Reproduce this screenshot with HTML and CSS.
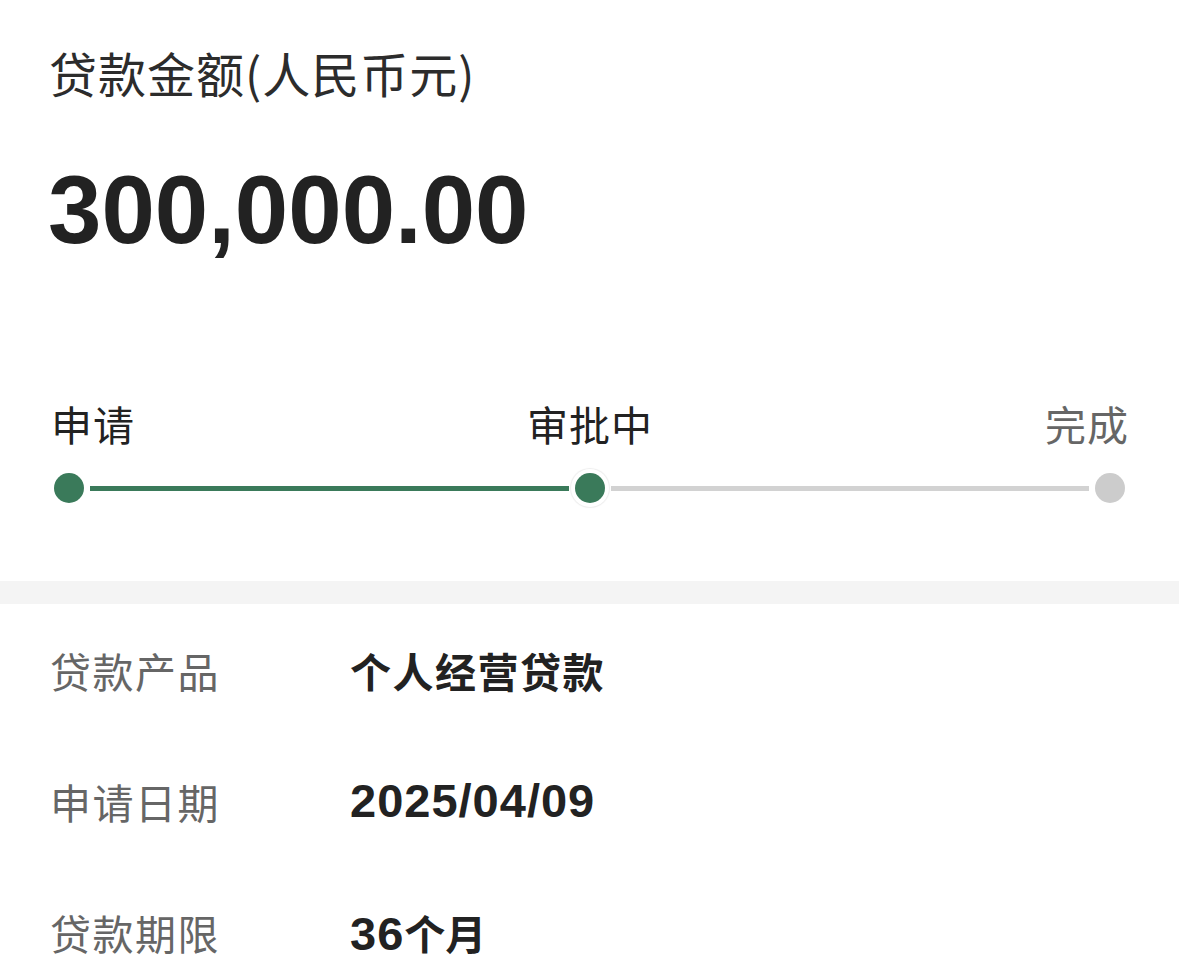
FILE: index.html
```html
<!DOCTYPE html>
<html lang="zh-CN">
<head>
<meta charset="utf-8">
<title>贷款详情</title>
<link rel="stylesheet" href="styles.css">
</head>
<body>
<main class="page">
  <section class="summary">
    <div class="title">贷款金额(人民币元)</div>
    <div class="amount">300,000.00</div>
    <div class="steps">
      <div class="labels">
        <span class="label done">申请</span>
        <span class="label done">审批中</span>
        <span class="label todo">完成</span>
      </div>
      <div class="track">
        <span class="dot green"></span>
        <span class="line green"></span>
        <span class="dot green current"></span>
        <span class="line gray"></span>
        <span class="dot gray"></span>
      </div>
    </div>
  </section>
  <div class="band"></div>
  <section class="details">
    <div class="row"><span class="key">贷款产品</span><span class="val">个人经营贷款</span></div>
    <div class="row"><span class="key">申请日期</span><span class="val num">2025/04/09</span></div>
    <div class="row"><span class="key">贷款期限</span><span class="val num">36<span class="cjk">个月</span></span></div>
  </section>
</main>
</body>
</html>
```

FILE: styles.css
```css
html, body {
  margin: 0;
  padding: 0;
  background: #ffffff;
}
body {
  font-family: "Liberation Sans", "Noto Sans CJK SC", sans-serif;
  color: #222222;
}
.page {
  width: 1179px;
  height: 974px;
  overflow: hidden;
}
.summary {
  padding: 40px 0 0 0;
}
.title {
  padding-left: 49px;
  font-family: "Noto Sans CJK SC", sans-serif;
  font-size: 48px;
  letter-spacing: 1px;
  line-height: 64px;
  color: #2c2c2c;
}
.amount {
  margin-top: 51px;
  padding-left: 48px;
  font-size: 96px;
  font-weight: 700;
  line-height: 110px;
  color: #222222;
}
.steps {
  margin-top: 133px;
  padding-bottom: 78px;
}
.labels {
  display: flex;
  justify-content: space-between;
  padding: 0 50px 0 51px;
  height: 50px;
  align-items: center;
}
.label {
  font-family: "Noto Sans CJK SC", sans-serif;
  font-size: 41px;
  letter-spacing: 1px;
  line-height: 50px;
}
.label.done { color: #222222; }
.label.todo { color: #666666; }
.track {
  margin-top: 25px;
  display: flex;
  align-items: center;
  height: 30px;
  padding: 0 54px;
}
.dot {
  flex: 0 0 30px;
  width: 30px;
  height: 30px;
  border-radius: 50%;
}
.dot.green { background: #3a7a5a; }
.dot.gray { background: #cccccc; }
.dot.current {
  box-shadow: 0 0 0 4px #ffffff, 0 0 1px 5px rgba(0, 0, 0, 0.07);
}
.line {
  flex: 1;
  height: 5px;
  margin: 0 6px;
}
.line.green { background: #3a7a5a; }
.line.gray { background: #d2d2d2; }
.band {
  height: 23px;
  background: #f4f4f4;
}
.details {
  margin-top: 0;
}
.row {
  display: flex;
  align-items: center;
  height: 131px;
  padding-left: 50px;
}
.key {
  width: 300px;
  font-family: "Noto Sans CJK SC", sans-serif;
  font-size: 41px;
  letter-spacing: 1.5px;
  color: #666666;
}
.val {
  font-family: "Noto Sans CJK SC", sans-serif;
  font-size: 41px;
  font-weight: 700;
  letter-spacing: 1.5px;
  color: #222222;
}
.val.num {
  font-family: "Liberation Sans", "Noto Sans CJK SC", sans-serif;
  font-size: 47px;
  letter-spacing: 1px;
}
.val.num .cjk {
  font-family: "Noto Sans CJK SC", sans-serif;
  font-size: 41px;
  letter-spacing: 0;
}
```
